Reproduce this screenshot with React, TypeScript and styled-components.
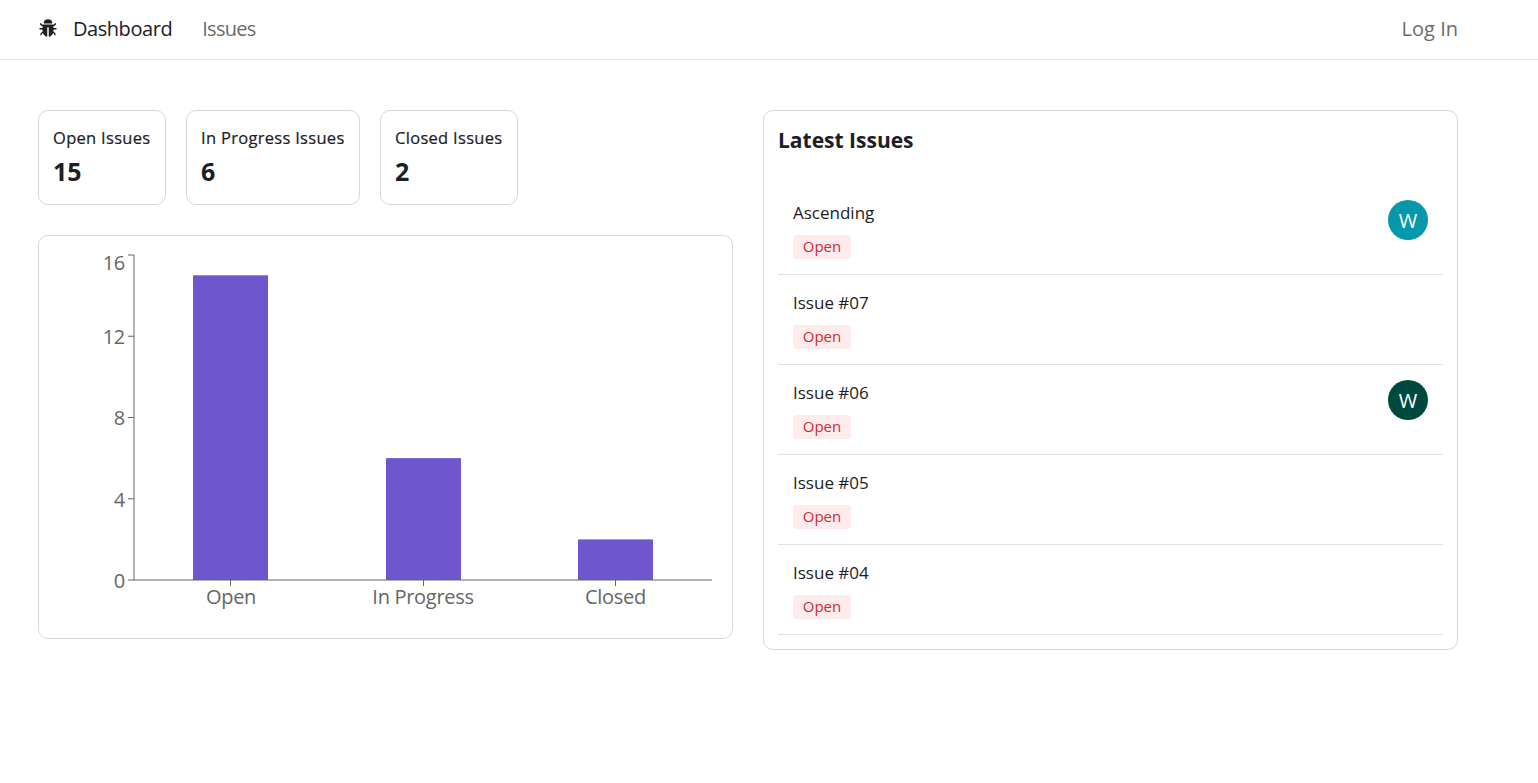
import React from "react";
import styled, { createGlobalStyle } from "styled-components";
import { AiFillBug } from "react-icons/ai";

const Global = createGlobalStyle`
  html, body { margin: 0; padding: 0; background: #fff; }
  body { font-family: "Open Sans", "Noto Sans", "Liberation Sans", sans-serif; color: #1c2024; }
  * { box-sizing: border-box; }
`;

const Nav = styled.nav`
  height: 60px;
  display: flex;
  align-items: center;
  justify-content: space-between;
  padding: 0 80px 3px 38px;
  border-bottom: 1px solid #e4e4e9;
`;
const NavLeft = styled.div`
  display: flex;
  align-items: center;
`;
const Logo = styled.span`
  display: flex;
  width: 20px;
  margin-right: 15px;
  font-size: 20px;
  color: #1c2024;
`;
const NavLink = styled.a<{ $active?: boolean }>`
  font-size: 20px;
  letter-spacing: -0.45px;
  margin-right: 30px;
  color: ${(p) => (p.$active ? "#1c2024" : "#6b6b6b")};
`;
const IssuesLink = styled(NavLink)`
  letter-spacing: -0.7px;
`;
const LoginLink = styled(NavLink)`
  margin-right: 0;
  letter-spacing: 0;
`;
const Main = styled.main`
  display: grid;
  grid-template-columns: 695px 695px;
  gap: 30px;
  padding: 50px 0 0 38px;
  align-items: start;
`;
const Column = styled.div`
  display: flex;
  flex-direction: column;
  gap: 30px;
`;
const Stats = styled.div`
  display: flex;
  gap: 20px;
`;
const StatCard = styled.div<{ $w: number }>`
  width: ${(p) => p.$w}px;
  height: 95px;
  padding: 15px 14px;
  border: 1px solid #d6d6e0;
  border-radius: 10px;
`;
const StatLabel = styled.div`
  font-size: 16.5px;
  font-weight: 500;
  letter-spacing: 0.3px;
  line-height: 24px;
  white-space: nowrap;
  -webkit-text-stroke: 0.2px #1c2024;
`;
const StatValue = styled.div`
  font-size: 25px;
  font-weight: 700;
  line-height: 32px;
  margin-top: 5px;
`;
const ChartCard = styled.div`
  height: 404px;
  border: 1px solid #d6d6e0;
  border-radius: 10px;
`;
const ChartSvg = styled.svg`
  display: block;
`;
const ChartLabel = styled.text`
  font-family: "Open Sans", "Noto Sans", sans-serif;
  font-size: 20px;
  letter-spacing: -0.3px;
  fill: #666;
`;
const ListCard = styled.div`
  height: 540px;
  padding: 15px 14px;
  border: 1px solid #d6d6e0;
  border-radius: 10px;
`;
const ListTitle = styled.h2`
  margin: 0;
  height: 59px;
  font-size: 21px;
  font-weight: 700;
  line-height: 29px;
`;
const Row = styled.div`
  height: 90px;
  padding: 15px;
  display: flex;
  justify-content: space-between;
  border-bottom: 1px solid #e0e0e6;
`;
const RowBody = styled.div`
  display: flex;
  flex-direction: column;
  align-items: flex-start;
  gap: 9px;
`;
const RowTitle = styled.div`
  font-size: 17px;
  line-height: 26px;
`;
const Badge = styled.span`
  height: 25px;
  width: 58px;
  padding-bottom: 2px;
  display: flex;
  align-items: center;
  justify-content: center;
  border-radius: 4px;
  font-size: 15px;
  font-weight: 500;
  background: #feebec;
  color: #ce2c31;
`;
const Avatar = styled.div<{ $bg: string }>`
  width: 40px;
  height: 40px;
  border-radius: 50%;
  display: flex;
  align-items: center;
  justify-content: center;
  font-size: 20px;
  color: #fff;
  background: ${(p) => p.$bg};
`;

const BASE = 344;
const yTicks = [
  { v: 16, y: 19, ty: 34 },
  { v: 12, y: 100.25, ty: 108 },
  { v: 8, y: 181.5, ty: 189 },
  { v: 4, y: 262.75, ty: 271 },
  { v: 0, y: 344, ty: 352 },
];
const bars = [
  { label: "Open", x: 154, top: 39.31, lx: 192 },
  { label: "In Progress", x: 347, top: 222.13, lx: 384 },
  { label: "Closed", x: 539, top: 303.4, lx: 576.5 },
];

function Chart() {
  return (
    <ChartSvg width={693} height={402} viewBox="0 0 693 402">
      {bars.map((b) => (
        <rect key={b.label} x={b.x} y={b.top} width={75} height={BASE - b.top} fill="#6e56cf" />
      ))}
      <g stroke="#666" strokeWidth={1} fill="none">
        <path d="M95 19V344M95 344H673" />
        {yTicks.map((t) => (
          <path key={t.v} d={`M89 ${t.y}H95`} />
        ))}
        {bars.map((b) => (
          <path key={b.label} d={`M${b.x + 37.5} 344V350`} />
        ))}
      </g>
      {yTicks.map((t) => (
        <ChartLabel key={t.v} x={86} y={t.ty} textAnchor="end">{t.v}</ChartLabel>
      ))}
      {bars.map((b) => (
        <ChartLabel key={b.label} x={b.lx} y={368} textAnchor="middle">{b.label}</ChartLabel>
      ))}
    </ChartSvg>
  );
}

const issues = [
  { title: "Ascending", avatar: "#0797ab" },
  { title: "Issue #07" },
  { title: "Issue #06", avatar: "#00493e" },
  { title: "Issue #05" },
  { title: "Issue #04" },
];

export default function App() {
  return (
    <>
      <Global />
      <Nav>
        <NavLeft>
          <Logo><AiFillBug /></Logo>
          <NavLink $active>Dashboard</NavLink>
          <IssuesLink>Issues</IssuesLink>
        </NavLeft>
        <LoginLink>Log In</LoginLink>
      </Nav>
      <Main>
        <Column>
          <Stats>
            <StatCard $w={128}><StatLabel>Open Issues</StatLabel><StatValue>15</StatValue></StatCard>
            <StatCard $w={174}><StatLabel>In Progress Issues</StatLabel><StatValue>6</StatValue></StatCard>
            <StatCard $w={138}><StatLabel>Closed Issues</StatLabel><StatValue>2</StatValue></StatCard>
          </Stats>
          <ChartCard><Chart /></ChartCard>
        </Column>
        <ListCard>
          <ListTitle>Latest Issues</ListTitle>
          {issues.map((i) => (
            <Row key={i.title}>
              <RowBody>
                <RowTitle>{i.title}</RowTitle>
                <Badge>Open</Badge>
              </RowBody>
              {i.avatar && <Avatar $bg={i.avatar}>W</Avatar>}
            </Row>
          ))}
        </ListCard>
      </Main>
    </>
  );
}
